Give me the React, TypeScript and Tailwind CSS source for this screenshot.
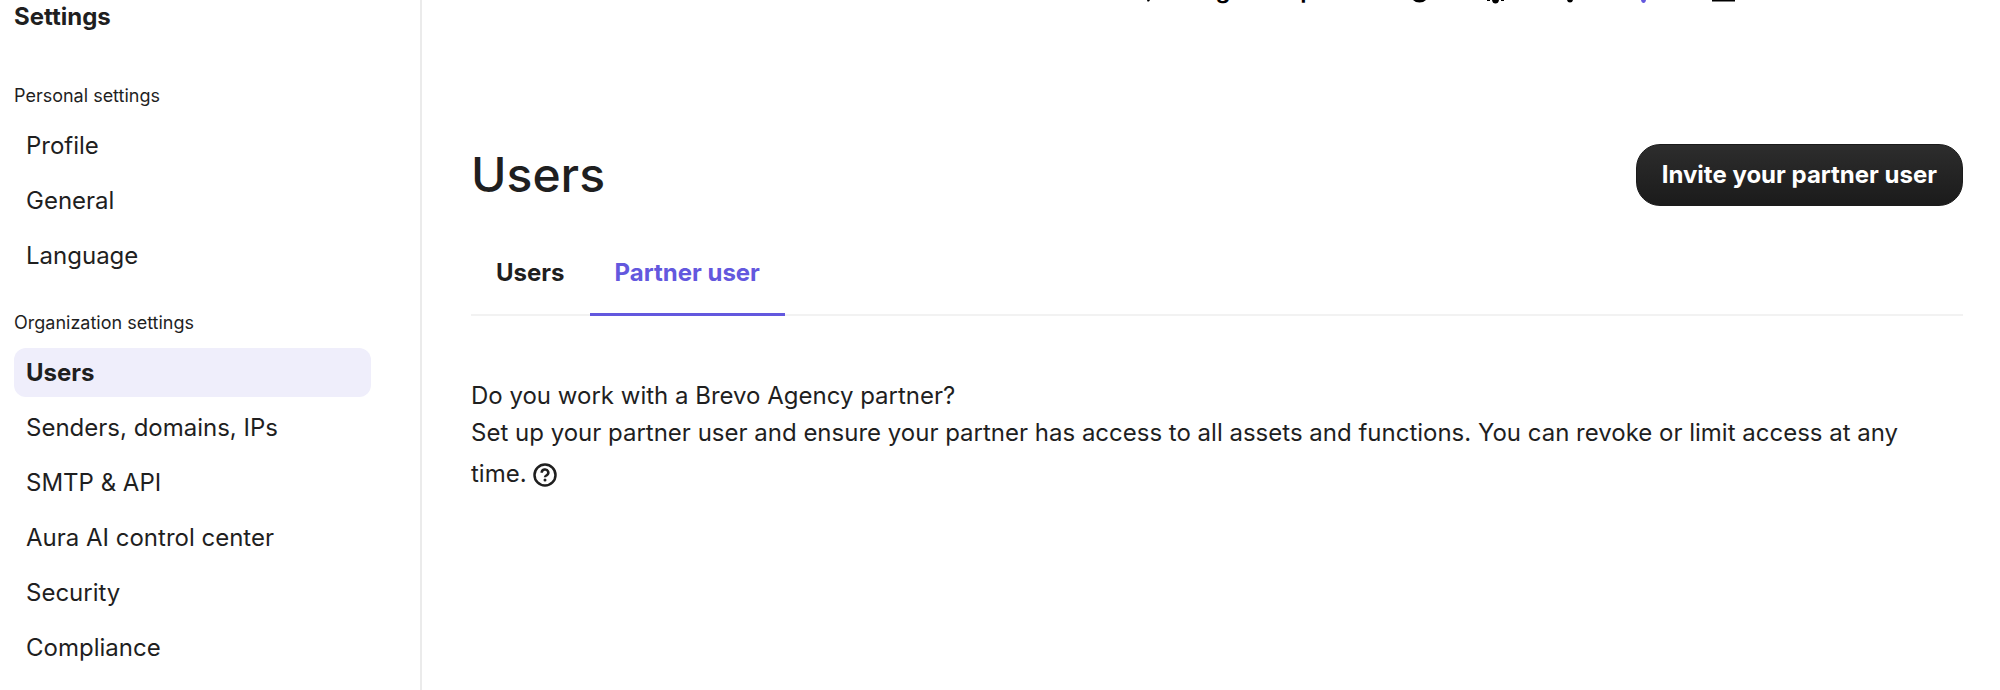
import { useState } from "react";
import clsx from "clsx";

const sections = [
  { title: "Personal settings", items: ["Profile", "General", "Language"] },
  {
    title: "Organization settings",
    items: [
      "Users",
      "Senders, domains, IPs",
      "SMTP & API",
      "Aura AI control center",
      "Security",
      "Compliance",
    ],
  },
];

const tabs = ["Users", "Partner user"];

const Sidebar = () => (
  <aside className="w-[422px] shrink-0 border-r-2 border-[#ebebeb] pl-[14px] pr-[49px]">
    <h2 className="mb-[50px] text-2xl leading-[34px] font-bold">Settings</h2>
    {sections.map((section) => (
      <nav key={section.title} aria-label={section.title} className="mb-[31px]">
        <h3 className="mb-[13px] text-lg leading-6">{section.title}</h3>
        <ul className="flex flex-col gap-[6px]">
          {section.items.map((item) => (
            <li key={item}>
              <a
                href="#"
                className={clsx(
                  "block rounded-xl px-3 text-2xl leading-[49px]",
                  item === "Users" && "bg-[#efeefb] font-bold"
                )}
              >
                {item}
              </a>
            </li>
          ))}
        </ul>
      </nav>
    ))}
  </aside>
);

const TopBar = () => (
  <header className="flex h-[5px] items-end justify-end overflow-hidden pr-[264px] text-black">
    <svg width="8" height="5" viewBox="0 0 8 5" fill="currentColor" aria-hidden="true">
      <path d="M2 0h3l-1 1.500H2.500z" />
    </svg>
    <span className="mr-[58px] ml-[18px] text-2xl leading-[30px] font-semibold whitespace-nowrap">Usage and plan</span>
    <svg width="328" height="5" viewBox="262 0 328 5" fill="currentColor" aria-hidden="true">
      <path d="M267 0h13q-2.500 2.500-6.500 2.500T267 0z" />
      <path d="M341 0h3v1h-3zm5 0h7q-.5 3.500-3.500 3.500T346 0zm9 0h3v1h-3z" />
      <path d="M421 0h6q-.5 2.500-3 2.500t-3-2.500z" />
      <path d="M495 0h5q-.5 3-2.500 3t-2.500-3z" fill="#6358de" />
      <path d="M566 0h23v1.500h-23z" />
    </svg>
  </header>
);

const HelpIcon = () => (
  <svg width="24" height="24" viewBox="0 0 24 24" fill="none" stroke="currentColor" strokeWidth="2.500">
    <circle cx="12" cy="12" r="10.500" />
    <path d="M8.700 9.700a3.300 3.100 0 1 1 4.900 2.600c-1 .6-1.600 1.100-1.600 2" />
    <circle cx="12" cy="17" r="1.500" fill="currentColor" stroke="none" />
  </svg>
);

export default function App() {
  const [activeTab, setActiveTab] = useState("Partner user");

  return (
    <div className="flex h-screen overflow-hidden bg-white font-['Inter',sans-serif] text-[#1f1f1f]">
      <Sidebar />
      <div className="min-w-0 flex-1">
        <TopBar />
        <main className="pt-[139px] pr-[37px] pl-[49px]">
          <div className="flex items-center justify-between">
            <h1 className="text-5xl font-medium">Users</h1>
            <button
              type="button"
              className="h-[62px] rounded-3xl border border-[#1b1b1b] bg-linear-to-b from-[#2d2d2d] to-[#1b1b1b] px-[25px] text-2xl font-bold text-white"
            >
              Invite your partner user
            </button>
          </div>

          <div role="tablist" className="mt-6 flex h-[86px] border-b-2 border-[#f2f2f2]">
            {tabs.map((tab) => (
              <button
                key={tab}
                type="button"
                role="tab"
                aria-selected={activeTab === tab}
                onClick={() => setActiveTab(tab)}
                className={clsx(
                  "-mb-[2px] border-b-3 px-[25px] pt-[3px] text-2xl font-bold",
                  activeTab === tab ? "border-[#6358de] text-[#6358de]" : "border-transparent"
                )}
              >
                {tab}
              </button>
            ))}
          </div>

          <div className="mt-[61px] pr-6 text-2xl leading-[37px]">
            <p>Do you work with a Brevo Agency partner?</p>
            <p>
              Set up your partner user and ensure your partner has access to all assets and functions. You can revoke or
              limit access at any{" "}
              <span className="whitespace-nowrap">
                time.{" "}
                <button type="button" aria-label="More information" className="inline-flex h-12 items-center align-middle">
                  <HelpIcon />
                </button>
              </span>
            </p>
          </div>
        </main>
      </div>
    </div>
  );
}
